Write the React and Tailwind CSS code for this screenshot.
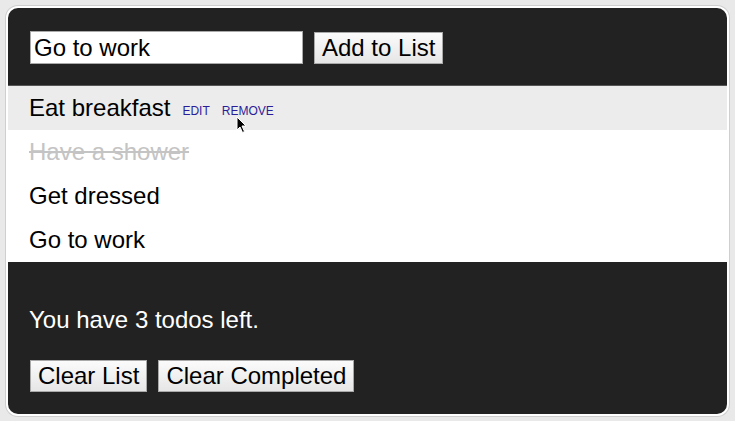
import React from 'react'

const todos = [
  { text: 'Eat breakfast', done: false, hover: true },
  { text: 'Have a shower', done: true },
  { text: 'Get dressed', done: false },
  { text: 'Go to work', done: false },
]

const btn = "h-[32px] px-[7px] border border-[#a9a9a9] bg-gradient-to-b from-[#fbfbfb] to-[#e6e6e6] text-black text-[24px] leading-none"

export default function App() {
  const [value, setValue] = React.useState('Go to work')

  return (
    <div className="w-[735px] h-[421px] bg-[#e9e9e9] p-[6px] font-['Liberation_Sans',Arial,sans-serif]">
      <div className="h-[410px] rounded-[12px] border-2 border-white shadow-[0_0_0_1px_#cfcfcf] bg-[#222222] overflow-hidden flex flex-col">
        <div className="h-[78px] flex items-start gap-[11px] pl-[22px] pt-[23px] border-b border-[#555]">
          <input
            value={value}
            onChange={(e) => setValue(e.target.value)}
            className="w-[273px] h-[33px] bg-white border border-[#aaa] px-[3px] text-[24px] text-black outline-none"
          />
          <button className={btn + " mt-[1px]"}>Add to List</button>
        </div>

        <ul className="bg-white">
          {todos.map((t) => (
            <li
              key={t.text}
              className={`h-[44px] flex items-center pl-[21px] text-[24px] ${t.hover ? 'bg-[#ececec]' : ''}`}
            >
              <span className={t.done ? 'line-through text-[#c4c4c4]' : 'text-black'}>{t.text}</span>
              {t.hover && (
                <span className="flex gap-[12px] ml-[12px] mt-[5px] text-[12px] text-[#2a1d9a]">
                  <span>EDIT</span>
                  <span className="relative">
                    REMOVE
                    <svg className="absolute left-[14px] top-[14px]" width="12" height="18" viewBox="0 0 12 18">
                      <path d="M1 1 L1 14 L4 11 L6.5 16.5 L8.5 15.5 L6 10 L10 10 Z" fill="#000" stroke="#fff" strokeWidth="1" />
                    </svg>
                  </span>
                </span>
              )}
            </li>
          ))}
        </ul>

        <div className="flex-1 pl-[21px] pt-[46px]">
          <p className="text-white text-[24px] leading-none">You have 3 todos left.</p>
          <div className="flex gap-[11px] mt-[28px] pl-[1px]">
            <button className={btn}>Clear List</button>
            <button className={btn}>Clear Completed</button>
          </div>
        </div>
      </div>
    </div>
  )
}
